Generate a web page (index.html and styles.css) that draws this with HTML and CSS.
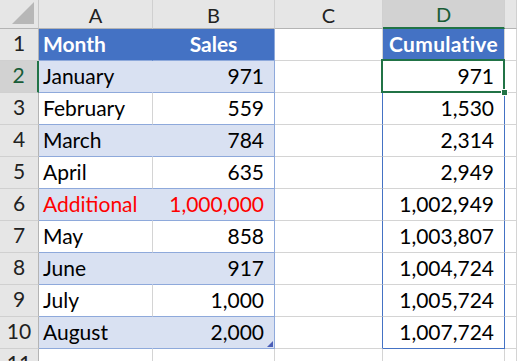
FILE: index.html
```html
<!DOCTYPE html>
<html>
<head>
    <title>Cumulative Sales</title>
    <link rel="stylesheet" href="styles.css">
</head>
<body>
    <div class="sheet">
        <!-- column headers -->
        <div class="corner">
            <svg class="corner-mark" width="22" height="22" viewBox="0 0 22 22"><polygon points="22,0 22,22 0,22" fill="#b7b7b7"/></svg>
        </div>
        <div class="col-head">A</div>
        <div class="col-head">B</div>
        <div class="col-head">C</div>
        <div class="col-head active">D</div>
        <div class="col-head"></div>

        <!-- row 1 -->
        <div class="row-head">1</div>
        <div class="cell tbl th tl">Month</div>
        <div class="cell tbl th tr">Sales</div>
        <div class="cell"></div>
        <div class="cell cum-head">Cumulative</div>
        <div class="cell"></div>

        <!-- row 2 -->
        <div class="row-head active">2</div>
        <div class="cell tbl band tl">January</div>
        <div class="cell tbl band tr num">971</div>
        <div class="cell range-left"></div>
        <div class="cell num cum selected">971<span class="fill-handle"></span></div>
        <div class="cell"></div>

        <div class="row-head">3</div>
        <div class="cell tbl tl">February</div>
        <div class="cell tbl tr num">559</div>
        <div class="cell range-left"></div>
        <div class="cell num cum">1,530</div>
        <div class="cell"></div>

        <div class="row-head">4</div>
        <div class="cell tbl band tl">March</div>
        <div class="cell tbl band tr num">784</div>
        <div class="cell range-left"></div>
        <div class="cell num cum">2,314</div>
        <div class="cell"></div>

        <div class="row-head">5</div>
        <div class="cell tbl tl">April</div>
        <div class="cell tbl tr num">635</div>
        <div class="cell range-left"></div>
        <div class="cell num cum">2,949</div>
        <div class="cell"></div>

        <div class="row-head">6</div>
        <div class="cell tbl band tl red">Additional</div>
        <div class="cell tbl band tr num red">1,000,000</div>
        <div class="cell range-left"></div>
        <div class="cell num cum">1,002,949</div>
        <div class="cell"></div>

        <div class="row-head">7</div>
        <div class="cell tbl tl">May</div>
        <div class="cell tbl tr num">858</div>
        <div class="cell range-left"></div>
        <div class="cell num cum">1,003,807</div>
        <div class="cell"></div>

        <div class="row-head">8</div>
        <div class="cell tbl band tl">June</div>
        <div class="cell tbl band tr num">917</div>
        <div class="cell range-left"></div>
        <div class="cell num cum">1,004,724</div>
        <div class="cell"></div>

        <div class="row-head">9</div>
        <div class="cell tbl tl">July</div>
        <div class="cell tbl tr num">1,000</div>
        <div class="cell range-left"></div>
        <div class="cell num cum">1,005,724</div>
        <div class="cell"></div>

        <div class="row-head">10</div>
        <div class="cell tbl band tl">August</div>
        <div class="cell tbl band tr num">2,000<span class="resize-handle"></span></div>
        <div class="cell range-left"></div>
        <div class="cell num cum last">1,007,724</div>
        <div class="cell"></div>

        <div class="row-head">11</div>
        <div class="cell"></div>
        <div class="cell"></div>
        <div class="cell"></div>
        <div class="cell"></div>
        <div class="cell"></div>
    </div>
</body>
</html>
```

FILE: styles.css
```css
* {
    margin: 0;
    padding: 0;
    box-sizing: border-box;
}

body {
    background: #fff;
    font-family: 'Lato', sans-serif;
    overflow: hidden;
}

.sheet {
    display: grid;
    grid-template-columns: 39px 114px 122px 108px 122px 1fr;
    grid-template-rows: 29px repeat(11, 32px);
    width: 100vw;
    height: 100vh;
    overflow: hidden;
    font-size: 21px;
    color: #000;
}

.corner,
.col-head,
.row-head {
    background: #e6e6e6;
    border-right: 1px solid #c8c8c8;
    border-bottom: 1px solid #b4b4b4;
    color: #222;
}

.corner {
    display: flex;
    justify-content: flex-end;
    align-items: flex-end;
    padding: 0 4px 4px 0;
}

.col-head {
    display: flex;
    justify-content: center;
    align-items: center;
    font-size: 20px;
    padding-top: 1px;
    border-right-color: #d0d0d0;
}

.col-head.active {
    background: #d2d2d2;
    color: #185c37;
    border-bottom: 2px solid #217346;
}

.row-head {
    display: flex;
    justify-content: center;
    align-items: flex-end;
    padding-bottom: 5px;
    border-bottom-color: #d0d0d0;
    border-right-color: #b4b4b4;
}

.row-head.active {
    background: #d2d2d2;
    color: #185c37;
    border-right: 2px solid #217346;
}

.cell {
    position: relative;
    display: flex;
    align-items: flex-end;
    padding: 0 4px 4px 4px;
    border-right: 1px solid #d4d4d4;
    border-bottom: 1px solid #d4d4d4;
    white-space: nowrap;
}

.num {
    justify-content: flex-end;
    padding-right: 10px;
}

/* table A1:B10 */
.tbl {
    border-bottom-color: #8ea9db;
}

.tbl.tr {
    border-right-color: #8ea9db;
}

.band {
    background: #d9e1f2;
}

.band.tl {
    border-right-color: #d9e1f2;
}

.th {
    background: #4472c4;
    color: #fff;
    font-weight: 700;
}

.th.tl {
    border-right-color: #4472c4;
}

.th.tr {
    justify-content: center;
}

.red {
    color: #ff0000;
}

.resize-handle {
    position: absolute;
    right: 1px;
    bottom: 1px;
    width: 0;
    height: 0;
    border-left: 6px solid transparent;
    border-bottom: 6px solid #4b5fb8;
}

/* cumulative column */
.cum-head {
    background: #4472c4;
    color: #fff;
    font-weight: 700;
    justify-content: center;
    padding: 0 0 4px 0;
    letter-spacing: 0.3px;
}

.range-left {
    border-right-color: #4472c4;
}

.cum {
    border-right-color: #4472c4;
}

.cum.last {
    border-bottom-color: #4472c4;
}

.selected::before {
    content: "";
    position: absolute;
    top: -2px;
    left: -2px;
    right: -1px;
    bottom: -1px;
    border: 2px solid #217346;
}

.fill-handle {
    position: absolute;
    right: -4px;
    bottom: -4px;
    width: 7px;
    height: 7px;
    background: #217346;
    border: 1px solid #fff;
    z-index: 2;
}
```
